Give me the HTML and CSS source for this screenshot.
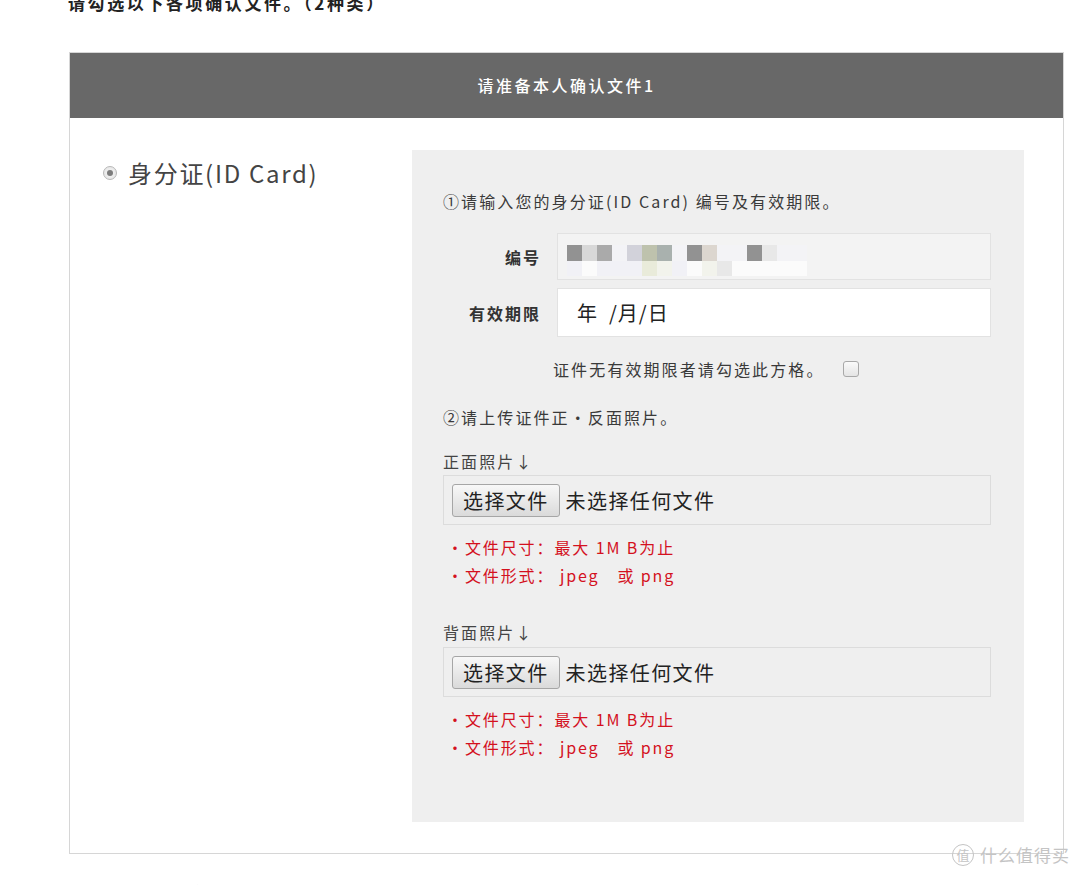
FILE: index.html
```html
<!DOCTYPE html>
<html lang="zh-CN">
<head>
<meta charset="utf-8">
<title>本人确认文件</title>
<link rel="stylesheet" href="styles.css">
</head>
<body>
<div class="page">
  <h2 class="lead">请勾选以下各项确认文件。（2种类）</h2>

  <section class="doc-box">
    <header class="doc-head">请准备本人确认文件1</header>
    <div class="doc-body">
      <div class="doc-choice">
        <span class="radio"><span class="radio-dot"></span></span>
        <span class="choice-label">身分证(ID Card)</span>
      </div>

      <div class="doc-panel">
        <p class="step">①请输入您的身分证(ID Card) 编号及有效期限。</p>

        <div class="field">
          <span class="field-label">编号</span>
          <div class="field-input input-number">
            <div class="mosaic">
              <span class="c1"></span><span class="c2"></span><span class="c3"></span><span class="c0"></span>
              <span class="c4"></span><span class="c5"></span><span class="c6"></span><span class="c0"></span>
              <span class="c1"></span><span class="c7"></span><span class="c0"></span><span class="c0"></span>
              <span class="c1"></span><span class="c8"></span><span class="c0"></span><span class="c0"></span>
              <span class="c9"></span><span class="cw"></span><span class="c9"></span><span class="c9"></span>
              <span class="c9"></span><span class="ca"></span><span class="cb"></span><span class="c9"></span>
              <span class="cw"></span><span class="cb"></span><span class="c8"></span><span class="cw"></span>
              <span class="cw"></span><span class="cw"></span><span class="cw"></span><span class="cw"></span>
            </div>
          </div>
        </div>

        <div class="field">
          <span class="field-label">有效期限</span>
          <div class="field-input input-date">年 &nbsp;/月/日</div>
        </div>

        <div class="no-expiry">
          <span>证件无有效期限者请勾选此方格。</span>
          <span class="checkbox"></span>
        </div>

        <p class="step step-upload">②请上传证件正・反面照片。</p>

        <div class="upload">
          <p class="upload-title">正面照片↓</p>
          <div class="file-box">
            <span class="file-btn">选择文件</span>
            <span class="file-name">未选择任何文件</span>
          </div>
          <ul class="notes">
            <li>・文件尺寸：最大 1M B为止</li>
            <li>・文件形式： jpeg　或 png</li>
          </ul>
        </div>

        <div class="upload upload-back">
          <p class="upload-title">背面照片↓</p>
          <div class="file-box">
            <span class="file-btn">选择文件</span>
            <span class="file-name">未选择任何文件</span>
          </div>
          <ul class="notes">
            <li>・文件尺寸：最大 1M B为止</li>
            <li>・文件形式： jpeg　或 png</li>
          </ul>
        </div>
      </div>
    </div>
  </section>

  <p class="tail">请准备本人确认文件2（任选其一）</p>

  <div class="watermark">
    <span class="wm-badge">值</span>
    <span class="wm-text">什么值得买</span>
  </div>
</div>
</body>
</html>
```

FILE: styles.css
```css
* {
  box-sizing: border-box;
}

html, body {
  margin: 0;
  padding: 0;
  background: #ffffff;
}

body {
  font-family: "Noto Sans CJK SC", "Noto Sans", sans-serif;
  color: #333333;
  overflow: hidden;
  height: 885px;
}

.page {
  position: relative;
  width: 1080px;
  height: 885px;
  padding-left: 69px;
}

.lead {
  margin: -8px 0 0 -1px;
  height: 60px;
  font-size: 17px;
  line-height: 22px;
  font-weight: 700;
  letter-spacing: 2.6px;
  color: #222222;
}

/* outer card */
.doc-box {
  width: 995px;
  border: 1px solid #d6d6d6;
  background: #ffffff;
}

.doc-head {
  height: 65px;
  background: #686868;
  color: #ffffff;
  font-size: 16px;
  font-weight: 500;
  letter-spacing: 2.5px;
  line-height: 65px;
  text-align: center;
}

.doc-body {
  display: flex;
  padding: 32px 39px 31px 0;
}

.doc-choice {
  width: 342px;
  flex: none;
  display: flex;
  align-items: center;
  gap: 11px;
  padding-left: 33px;
  align-self: flex-start;
  margin-top: 7px;
}

.radio {
  width: 14px;
  height: 14px;
  border-radius: 50%;
  border: 1px solid #b8b8b8;
  background: radial-gradient(circle, #f6f6f6 0, #e2e2e2 100%);
  display: flex;
  align-items: center;
  justify-content: center;
}

.radio-dot {
  width: 6px;
  height: 6px;
  border-radius: 50%;
  background: #7c7c7c;
}

.choice-label {
  font-size: 24px;
  line-height: 32px;
  color: #444444;
  letter-spacing: 1.7px;
}

/* grey form panel */
.doc-panel {
  flex: 1;
  background: #efefef;
  padding: 39px 33px 61px 31px;
  font-size: 16px;
  letter-spacing: 2.1px;
  color: #3a3a3a;
}

.step {
  margin: 0;
  line-height: 24px;
}

.field {
  display: flex;
  align-items: center;
  margin-top: 8px;
}

.step + .field {
  margin-top: 20px;
}

.field-label {
  width: 98px;
  flex: none;
  text-align: right;
  font-weight: 700;
  font-size: 16px;
  letter-spacing: 2px;
  color: #333333;
  margin-right: 16px;
}

.field-input {
  flex: 1;
  border: 1px solid #e2e2e2;
}

.input-number {
  height: 47px;
  background: #f3f3f3;
  padding: 11px 0 0 9px;
}

.mosaic {
  display: grid;
  grid-template-columns: repeat(16, 15px);
  grid-template-rows: 16px 15px;
}

.mosaic span { display: block; }
.mosaic .c0 { background: #f3f3f6; }
.mosaic .c1 { background: #929292; }
.mosaic .c2 { background: #d8d8d8; }
.mosaic .c3 { background: #aaaaaa; }
.mosaic .c4 { background: #d2d2da; }
.mosaic .c5 { background: #bec2ad; }
.mosaic .c6 { background: #a9b1ae; }
.mosaic .c7 { background: #dcd6cf; }
.mosaic .c8 { background: #e8e8e8; }
.mosaic .c9 { background: #f1f1f6; }
.mosaic .ca { background: #e9ebda; }
.mosaic .cb { background: #f2f3ec; }
.mosaic .cw { background: #fbfbfb; }

.input-date {
  height: 49px;
  background: #ffffff;
  font-size: 20px;
  line-height: 47px;
  padding-left: 19px;
  letter-spacing: 1px;
  color: #222222;
}

.no-expiry {
  display: flex;
  align-items: center;
  margin: 20px 0 0 110px;
  line-height: 24px;
}

.checkbox {
  width: 16px;
  height: 16px;
  margin-left: 18px;
  border: 1px solid #a8a8a8;
  border-radius: 3px;
  background: linear-gradient(#fafafa, #e4e4e4);
}

.step-upload {
  margin-top: 24px;
}

.upload {
  margin-top: 20px;
}

.upload-back {
  margin-top: 31px;
}

.upload-title {
  margin: 0 0 2px;
  line-height: 24px;
  color: #444444;
}

.upload-back .upload-title {
  margin-bottom: 3px;
}

.file-box {
  height: 50px;
  border: 1px solid #dcdcdc;
  background: #efefef;
  display: flex;
  align-items: center;
  padding-left: 8px;
  font-size: 20px;
  letter-spacing: 1.4px;
  color: #222222;
}

.file-btn {
  height: 33px;
  line-height: 31px;
  padding: 0 10px;
  border: 1px solid #a6a6a6;
  border-radius: 3px;
  background: linear-gradient(#f8f8f8, #dadada);
  margin-right: 6px;
}

.notes {
  list-style: none;
  margin: 8px 0 0 4px;
  padding: 0;
  color: #d4111e;
  font-size: 16px;
  line-height: 28px;
  letter-spacing: 1.9px;
}

.tail {
  margin: 26px 0 0 8px;
  font-size: 16px;
  color: #e6e6e6;
  font-weight: 700;
}

/* site watermark in the corner */
.watermark {
  position: absolute;
  right: 10px;
  top: 850px;
  display: flex;
  align-items: center;
  gap: 6px;
  color: #c4c4c4;
}

.wm-badge {
  width: 22px;
  height: 22px;
  border: 1.5px solid #c4c4c4;
  border-radius: 50%;
  font-size: 13px;
  line-height: 19px;
  text-align: center;
}

.wm-text {
  font-size: 17px;
  letter-spacing: 1px;
}
```
